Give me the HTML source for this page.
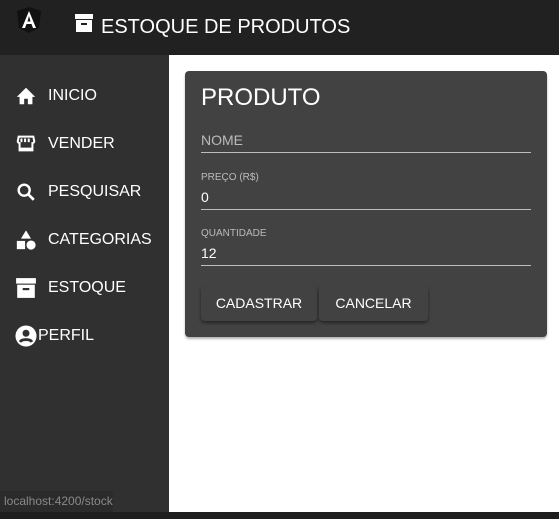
<!DOCTYPE html>
<html><head><meta charset="utf-8"><style>
*{margin:0;padding:0;box-sizing:border-box}
body{width:559px;height:519px;overflow:hidden;background:#fff;font-family:"Liberation Sans",Arial,sans-serif;position:relative}
.hdr{position:absolute;left:0;top:0;width:559px;height:55px;background:#212121;color:#fff}
.side{position:absolute;left:0;top:55px;width:169px;height:457px;background:#303030}
.bot{position:absolute;left:0;top:512px;width:559px;height:7px;background:#1e1e1e}
.nav{position:absolute;left:0;color:#fff;font-size:16px;height:24px;line-height:24px;width:169px}
.nav svg{position:absolute;left:15px;top:1px}
.nav span{position:absolute;left:48px;top:0}
.card{position:absolute;left:185px;top:71px;width:362px;height:266px;background:#424242;border-radius:4px;box-shadow:0 2px 2px rgba(0,0,0,.3);color:#fff}
.ln{position:absolute;left:16px;width:330px;height:1px;background:#bdbdbd}
.lbl{position:absolute;left:16px;font-size:10px;color:#bbb}
.val{position:absolute;left:16px;font-size:14px;color:#fff}
.btn{position:absolute;top:215px;height:35px;background:#424242;border-radius:4px;box-shadow:0 2px 3px rgba(0,0,0,.45);font-size:14px;line-height:35px;text-align:center;color:#fff}
</style></head><body>
<div class="hdr">
<svg style="position:absolute;left:16px;top:6px" width="26" height="28" viewBox="0 0 26 28"><path d="M13 1L25 5 23 22 13 27 3 22 1 5Z" fill="#111"/><path d="M13 5L6 22h3l1.5-4h5l1.5 4h3ZM11.5 15.5L13 10l1.5 5.5Z" fill="#fff"/></svg>
<svg style="position:absolute;left:74px;top:13px" width="20" height="20" viewBox="0 0 20 20"><rect x="1" y="1" width="18" height="5" fill="#fff"/><rect x="2" y="7" width="16" height="12" fill="#fff"/><rect x="7" y="10" width="6" height="2" fill="#212121"/></svg>
<div style="position:absolute;left:101px;top:16px;font-size:20px;color:#fff">ESTOQUE DE PRODUTOS</div>
</div>
<div class="side">
<div class="nav" style="top:29px"><svg width="22" height="22" viewBox="0 0 24 24"><path d="M10 21v-6h4v6h5v-8h3L12 3 2 13h3v8z" fill="#fff"/></svg><span>INICIO</span></div>
<div class="nav" style="top:77px"><svg width="22" height="22" viewBox="0 0 24 24"><path d="M4 4h16l1 5c0 1-1 2-2 2v8H5v-8c-1 0-2-1-2-2zM5 13v4h14v-4M7 6v4M11 6v4M15 6v4" fill="none" stroke="#fff" stroke-width="2.2"/></svg><span>VENDER</span></div>
<div class="nav" style="top:125px"><svg width="22" height="22" viewBox="0 0 24 24"><circle cx="10" cy="10" r="6" fill="none" stroke="#fff" stroke-width="2.6"/><path d="M14 14l6.5 6.5" stroke="#fff" stroke-width="3"/></svg><span>PESQUISAR</span></div>
<div class="nav" style="top:173px"><svg width="22" height="22" viewBox="0 0 24 24"><path d="M12 1.5l5.5 9H6.5z" fill="#fff"/><circle cx="17.5" cy="17.5" r="5" fill="#fff"/><rect x="2" y="13" width="9" height="9" fill="#fff"/></svg><span>CATEGORIAS</span></div>
<div class="nav" style="top:221px"><svg width="22" height="22" viewBox="0 0 20 20"><rect x="1" y="1" width="18" height="5" fill="#fff"/><rect x="2" y="7" width="16" height="12" fill="#fff"/><rect x="7" y="10" width="6" height="2" fill="#303030"/></svg><span>ESTOQUE</span></div>
<div class="nav" style="top:269px"><svg width="22" height="22" viewBox="0 0 24 24"><circle cx="12" cy="12" r="11.5" fill="#fff"/><circle cx="12" cy="9" r="3.8" fill="#303030"/><path d="M5.5 18.5c2-3.5 11-3.5 13 0" stroke="#303030" stroke-width="3.2" fill="none"/></svg><span style="left:38px">PERFIL</span></div>
<div style="position:absolute;left:0;top:436px;width:113px;height:21px;background:#2b2b2b;border-radius:0 4px 0 0;color:#8a8a8a;font-size:12px;line-height:21px;padding-left:4px">localhost:4200/stock</div>
</div>
<div class="bot"></div>
<div class="card">
<div style="position:absolute;left:16px;top:13px;font-size:24px">PRODUTO</div>
<div class="val" style="top:61px;color:#bbb">NOME</div>
<div class="ln" style="top:81px"></div>
<div class="lbl" style="top:101px">PREÇO (R$)</div>
<div class="val" style="top:118px">0</div>
<div class="ln" style="top:138px"></div>
<div class="lbl" style="top:157px">QUANTIDADE</div>
<div class="val" style="top:174px">12</div>
<div class="ln" style="top:194px"></div>
<div class="btn" style="left:16px;width:116px">CADASTRAR</div>
<div class="btn" style="left:134px;width:109px">CANCELAR</div>
</div>
</body></html>
